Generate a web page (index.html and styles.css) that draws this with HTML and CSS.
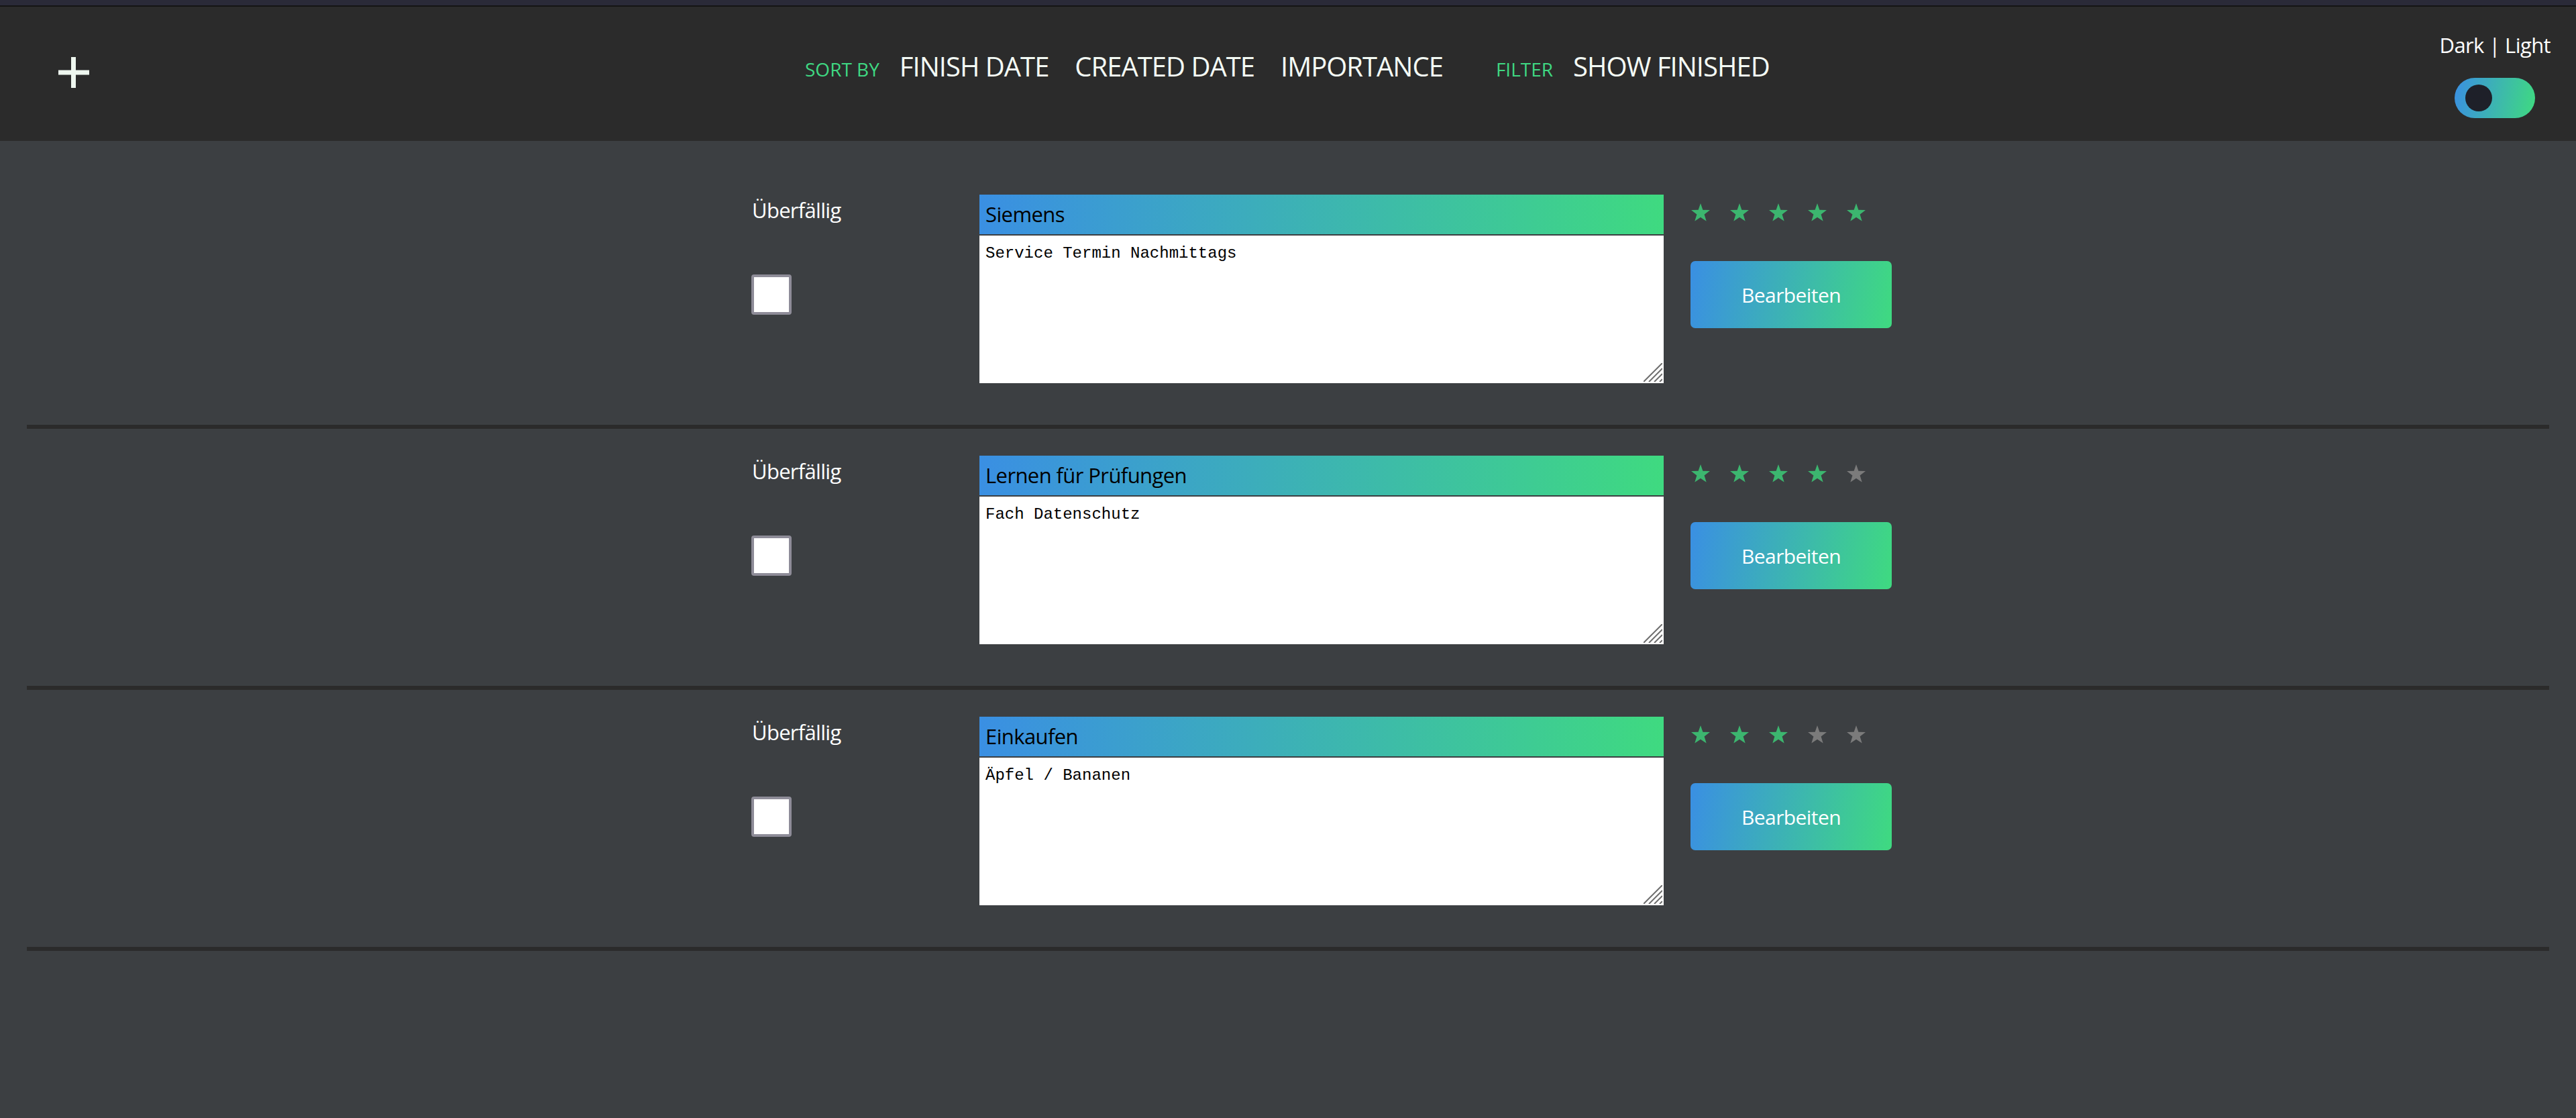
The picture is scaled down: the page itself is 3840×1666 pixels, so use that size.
FILE: index.html
```html
<!DOCTYPE html>
<html lang="de">
<head>
<meta charset="utf-8">
<title>Todo</title>
<link rel="stylesheet" href="styles.css">
</head>
<body>
<div class="topstrip"></div>
<header class="header">
  <button class="add" aria-label="Neu">
    <svg width="48" height="48" viewBox="0 0 48 48"><rect x="20" y="1" width="7" height="46" fill="#eef7ef"/><rect x="1" y="20.5" width="46" height="7" fill="#eef7ef"/></svg>
  </button>
  <nav class="nav">
    <span class="nav-label">SORT BY</span>
    <a class="nav-item">FINISH DATE</a>
    <a class="nav-item">CREATED DATE</a>
    <a class="nav-item">IMPORTANCE</a>
    <span class="nav-label filter">FILTER</span>
    <a class="nav-item">SHOW FINISHED</a>
  </nav>
  <div class="theme">
    <div class="theme-label">Dark | Light</div>
    <div class="toggle"><div class="knob"></div></div>
  </div>
</header>
<main class="list">
  <section class="task">
    <div class="col-state">
      <div class="overdue">Überfällig</div>
      <div class="check"></div>
    </div>
    <div class="col-body">
      <div class="title">Siemens</div>
      <div class="desc-wrap">
        <textarea class="desc">Service Termin Nachmittags</textarea>
        <svg class="grip" width="28" height="28" viewBox="0 0 28 28"><g stroke="#6e6e6e" stroke-width="2"><line x1="28" y1="0" x2="0" y2="28"/><line x1="28" y1="8" x2="8" y2="28"/><line x1="28" y1="16" x2="16" y2="28"/><line x1="28" y1="24" x2="24" y2="28"/></g></svg>
      </div>
    </div>
    <div class="col-actions">
      <div class="stars">
        <svg class="star on" viewBox="0 0 30 28"><polygon points="15,0 18.5,10.2 29.5,10.4 20.8,17 24,27.6 15,21.4 6,27.6 9.2,17 0.5,10.4 11.5,10.2"/></svg>
        <svg class="star on" viewBox="0 0 30 28"><polygon points="15,0 18.5,10.2 29.5,10.4 20.8,17 24,27.6 15,21.4 6,27.6 9.2,17 0.5,10.4 11.5,10.2"/></svg>
        <svg class="star on" viewBox="0 0 30 28"><polygon points="15,0 18.5,10.2 29.5,10.4 20.8,17 24,27.6 15,21.4 6,27.6 9.2,17 0.5,10.4 11.5,10.2"/></svg>
        <svg class="star on" viewBox="0 0 30 28"><polygon points="15,0 18.5,10.2 29.5,10.4 20.8,17 24,27.6 15,21.4 6,27.6 9.2,17 0.5,10.4 11.5,10.2"/></svg>
        <svg class="star on" viewBox="0 0 30 28"><polygon points="15,0 18.5,10.2 29.5,10.4 20.8,17 24,27.6 15,21.4 6,27.6 9.2,17 0.5,10.4 11.5,10.2"/></svg>
      </div>
      <button class="edit">Bearbeiten</button>
    </div>
  </section>
  <section class="task">
    <div class="col-state">
      <div class="overdue">Überfällig</div>
      <div class="check"></div>
    </div>
    <div class="col-body">
      <div class="title">Lernen für Prüfungen</div>
      <div class="desc-wrap">
        <textarea class="desc">Fach Datenschutz</textarea>
        <svg class="grip" width="28" height="28" viewBox="0 0 28 28"><g stroke="#6e6e6e" stroke-width="2"><line x1="28" y1="0" x2="0" y2="28"/><line x1="28" y1="8" x2="8" y2="28"/><line x1="28" y1="16" x2="16" y2="28"/><line x1="28" y1="24" x2="24" y2="28"/></g></svg>
      </div>
    </div>
    <div class="col-actions">
      <div class="stars">
        <svg class="star on" viewBox="0 0 30 28"><polygon points="15,0 18.5,10.2 29.5,10.4 20.8,17 24,27.6 15,21.4 6,27.6 9.2,17 0.5,10.4 11.5,10.2"/></svg>
        <svg class="star on" viewBox="0 0 30 28"><polygon points="15,0 18.5,10.2 29.5,10.4 20.8,17 24,27.6 15,21.4 6,27.6 9.2,17 0.5,10.4 11.5,10.2"/></svg>
        <svg class="star on" viewBox="0 0 30 28"><polygon points="15,0 18.5,10.2 29.5,10.4 20.8,17 24,27.6 15,21.4 6,27.6 9.2,17 0.5,10.4 11.5,10.2"/></svg>
        <svg class="star on" viewBox="0 0 30 28"><polygon points="15,0 18.5,10.2 29.5,10.4 20.8,17 24,27.6 15,21.4 6,27.6 9.2,17 0.5,10.4 11.5,10.2"/></svg>
        <svg class="star off" viewBox="0 0 30 28"><polygon points="15,0 18.5,10.2 29.5,10.4 20.8,17 24,27.6 15,21.4 6,27.6 9.2,17 0.5,10.4 11.5,10.2"/></svg>
      </div>
      <button class="edit">Bearbeiten</button>
    </div>
  </section>
  <section class="task">
    <div class="col-state">
      <div class="overdue">Überfällig</div>
      <div class="check"></div>
    </div>
    <div class="col-body">
      <div class="title">Einkaufen</div>
      <div class="desc-wrap">
        <textarea class="desc">Äpfel / Bananen</textarea>
        <svg class="grip" width="28" height="28" viewBox="0 0 28 28"><g stroke="#6e6e6e" stroke-width="2"><line x1="28" y1="0" x2="0" y2="28"/><line x1="28" y1="8" x2="8" y2="28"/><line x1="28" y1="16" x2="16" y2="28"/><line x1="28" y1="24" x2="24" y2="28"/></g></svg>
      </div>
    </div>
    <div class="col-actions">
      <div class="stars">
        <svg class="star on" viewBox="0 0 30 28"><polygon points="15,0 18.5,10.2 29.5,10.4 20.8,17 24,27.6 15,21.4 6,27.6 9.2,17 0.5,10.4 11.5,10.2"/></svg>
        <svg class="star on" viewBox="0 0 30 28"><polygon points="15,0 18.5,10.2 29.5,10.4 20.8,17 24,27.6 15,21.4 6,27.6 9.2,17 0.5,10.4 11.5,10.2"/></svg>
        <svg class="star on" viewBox="0 0 30 28"><polygon points="15,0 18.5,10.2 29.5,10.4 20.8,17 24,27.6 15,21.4 6,27.6 9.2,17 0.5,10.4 11.5,10.2"/></svg>
        <svg class="star off" viewBox="0 0 30 28"><polygon points="15,0 18.5,10.2 29.5,10.4 20.8,17 24,27.6 15,21.4 6,27.6 9.2,17 0.5,10.4 11.5,10.2"/></svg>
        <svg class="star off" viewBox="0 0 30 28"><polygon points="15,0 18.5,10.2 29.5,10.4 20.8,17 24,27.6 15,21.4 6,27.6 9.2,17 0.5,10.4 11.5,10.2"/></svg>
      </div>
      <button class="edit">Bearbeiten</button>
    </div>
  </section>
</main>
</body>
</html>
```

FILE: styles.css
```css
* { box-sizing: border-box; }
html, body {
  margin: 0;
  padding: 0;
  background: #3c3f42;
  font-family: "Open Sans", "Noto Sans", sans-serif;
  color: #ffffff;
  min-height: 1666px;
}
.topstrip {
  height: 10px;
  background: #2a2a38;
  border-bottom: 2px solid #141414;
}
.header {
  height: 200px;
  background: #2b2b2b;
  display: flex;
  align-items: flex-start;
  position: relative;
}
.add {
  background: none;
  border: 0;
  padding: 0;
  margin: 74px 0 0 86px;
  width: 48px;
  height: 48px;
  cursor: pointer;
}
.add svg { display: block; }
.nav {
  position: absolute;
  left: 1200px;
  top: 61px;
  display: flex;
  align-items: baseline;
  white-space: nowrap;
}
.nav-label {
  color: #3fd882;
  font-size: 28px;
  letter-spacing: 0;
  margin-right: 30px;
}
.nav-label.filter { margin-left: 40px; }
.nav-item {
  color: #f4fbf5;
  font-size: 40px;
  letter-spacing: -1px;
  margin-right: 39px;
}
.theme {
  position: absolute;
  right: 38px;
  top: 34px;
  display: flex;
  flex-direction: column;
  align-items: center;
}
.theme-label {
  font-size: 31px;
  letter-spacing: -0.6px;
  line-height: 46px;
}
.toggle {
  margin-top: 26px;
  width: 120px;
  height: 60px;
  border-radius: 30px;
  background: linear-gradient(100deg, #3a8fe3, #3fda80);
  padding: 10px 16px;
}
.knob {
  width: 40px;
  height: 40px;
  border-radius: 50%;
  background: #1e2029;
}
.list {
  padding-top: 40px;
}
.task {
  margin: 0 40px;
  padding: 40px 0 62px 1080px;
  border-bottom: 6px solid #2b2b2b;
  display: flex;
  align-items: flex-start;
}
.col-state {
  width: 340px;
  display: flex;
  flex-direction: column;
}
.overdue {
  font-size: 31px;
  letter-spacing: -0.7px;
  line-height: 40px;
  margin-top: 3px;
  margin-left: 1px;
}
.check {
  margin-top: 76px;
  width: 60px;
  height: 60px;
  background: #ffffff;
  border: 4px solid #8e8c98;
  border-radius: 4px;
}
.col-body {
  width: 1020px;
  display: flex;
  flex-direction: column;
  gap: 2px;
}
.title {
  height: 59px;
  background: linear-gradient(90deg, #3a8fe3, #3fda80);
  color: #000000;
  font-size: 31px;
  letter-spacing: -0.6px;
  line-height: 59px;
  padding-left: 9px;
}
.desc-wrap {
  position: relative;
  width: 1020px;
  height: 220px;
}
.desc {
  display: block;
  width: 1020px;
  height: 220px;
  border: 0;
  margin: 0;
  padding: 12px 9px;
  background: #ffffff;
  color: #000000;
  font-family: "Liberation Mono", "DejaVu Sans Mono", monospace;
  font-size: 24px;
  line-height: 30px;
  resize: none;
  outline: none;
}
.grip {
  position: absolute;
  right: 2px;
  bottom: 2px;
  display: block;
}
.col-actions {
  margin-left: 40px;
  width: 300px;
  display: flex;
  flex-direction: column;
}
.stars {
  margin-top: 13px;
  display: flex;
  gap: 28px;
  height: 27px;
}
.star { width: 30px; height: 27px; display: block; }
.star.on { fill: #3cb66f; }
.star.off { fill: #7b7b7b; }
.edit {
  margin-top: 59px;
  width: 300px;
  height: 100px;
  border: 0;
  border-radius: 7px;
  background: linear-gradient(100deg, #3a8fe3, #3fda80);
  color: #ffffff;
  font-family: "Open Sans", "Noto Sans", sans-serif;
  font-size: 30px;
  letter-spacing: -0.6px;
  padding: 0;
  cursor: pointer;
}
```
